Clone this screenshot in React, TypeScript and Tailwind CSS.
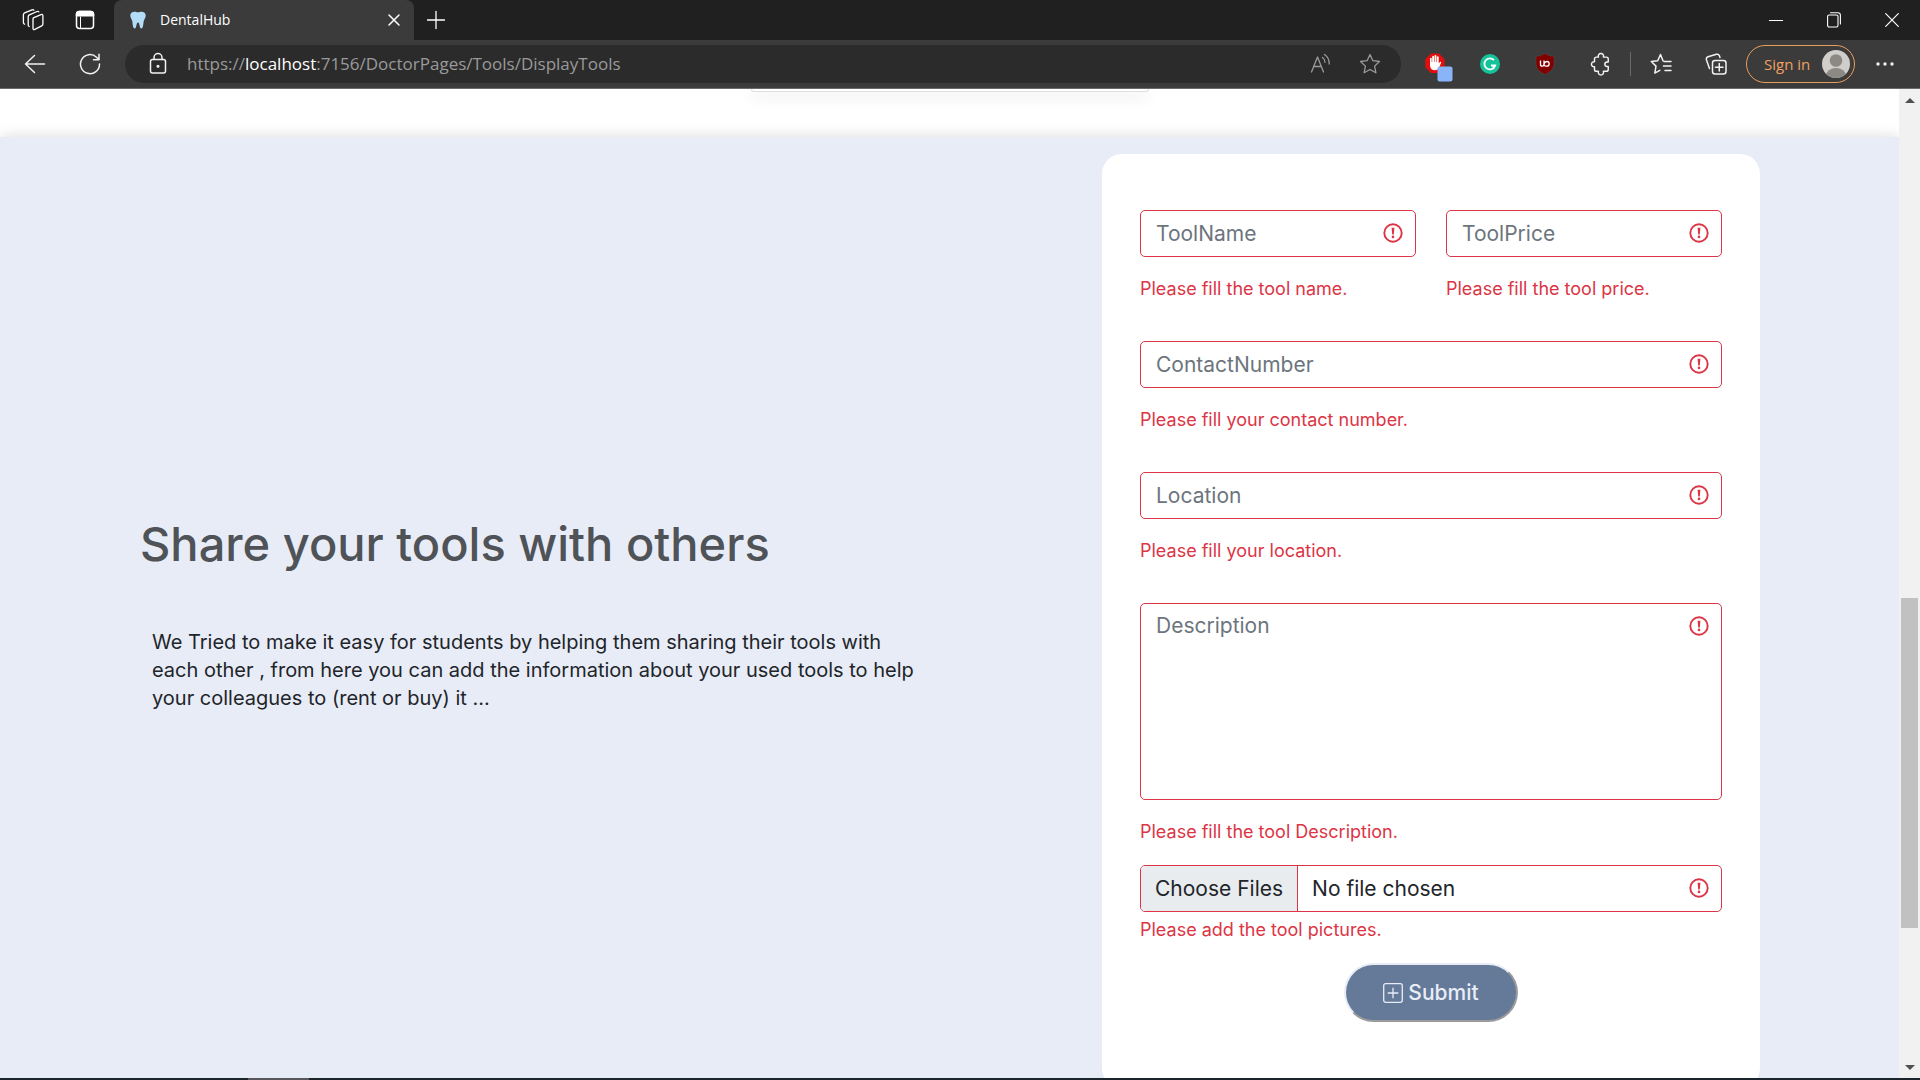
import React from "react";

const line = { fill: "none", stroke: "currentColor", strokeLinecap: "round" as const, strokeLinejoin: "round" as const };

function Alert() {
  return (
    <svg viewBox="0 0 20 20" className="pointer-events-none absolute top-[13px] right-[13px] size-5 text-[#dc3545]" aria-hidden="true">
      <circle cx="10" cy="10" r="8.7" {...line} strokeWidth="1.900" />
      <path d="M8.600 4.800h2.800l-.6 6.600H9.200z" fill="currentColor" />
      <circle cx="10" cy="13.900" r="1.300" fill="currentColor" />
    </svg>
  );
}

const control = "block w-full rounded-[5px] border border-[#dc3545] bg-white text-[21px] leading-[30px] text-[#212529] placeholder:text-[#6c757d] placeholder:opacity-100 outline-none";

function Field({ id, label, error }: { id: string; label: string; error: string }) {
  return (
    <div className="pb-[38px]">
      <div className="relative">
        <input id={id} aria-label={label} placeholder={label} aria-invalid="true" aria-describedby={id + "-error"} className={control + " h-[47px] px-[15px] pr-12"} />
        <Alert />
      </div>
      <p id={id + "-error"} className="mt-[18px] text-[18px] leading-7 text-[#dc3545]">{error}</p>
    </div>
  );
}

function TabStrip() {
  return (
    <div className="flex h-10 shrink-0 items-stretch bg-[#202020] text-white">
      <div className="flex w-[114px] items-center gap-[31px] pl-[22px]">
        <button aria-label="Workspaces">
          <svg viewBox="0 0 22 22" className="size-[22px]" {...line} strokeWidth="1.300">
            <path d="M11.300 8.800 19 5.600q1.900-.7 1.900 1.100v8.400q0 1.200-1.200 1.700l-6.900 3.500q-1.800.8-1.800-1.100v-9z" />
            <path d="M7.200 17.500q-1-.4-1-1.600V7.800q0-1.400 1.200-2l7.600-3.300q1.400-.5 1.800.4" />
            <path d="M2.600 15.200q-1.200-.4-1.200-1.700V5.800q0-1.300 1.200-1.900l7.400-3q1.200-.5 1.800.3" />
          </svg>
        </button>
        <button aria-label="Tab actions">
          <svg viewBox="0 0 20 20" className="size-5" {...line} strokeWidth="1.500">
            <rect x="1.500" y="1.500" width="17" height="17" rx="3" />
            <path d="M1.500 5.800V4.500q0-3 3-3h11q3 0 3 3v1.300z" fill="currentColor" />
            <path d="M5.500 7v11" strokeWidth="1" />
          </svg>
        </button>
      </div>
      <div className="flex w-[300px] items-center rounded-t-lg bg-[#3b3b3b] pr-3 pl-4">
        <svg viewBox="0 0 16 18" className="h-[18px] w-4" aria-hidden="true">
          <path d="M4 .8C1.500 1 .1 2.800.3 5c.2 1.800 1.200 2.900 1.800 4.600.7 2.500.5 8 2.600 8s1.300-6 3.300-6 1.200 6 3.300 6 1.900-5.500 2.600-8c.6-1.700 1.600-2.800 1.800-4.600.2-2.200-1.200-4-3.700-4.200-1.500-.2-2.500.5-4 .5S5.500.6 4 .8z" fill="#b3dcf7" />
        </svg>
        <span className="ml-3.5 grow pb-0.5 text-[14px]">DentalHub</span>
        <button aria-label="Close tab">
          <svg viewBox="0 0 16 16" className="size-4" {...line} strokeWidth="1.500"><path d="m3 3 10 10M13 3 3 13" /></svg>
        </button>
      </div>
      <button aria-label="New tab" className="ml-3">
        <svg viewBox="0 0 20 20" className="size-5" {...line} strokeWidth="1.300"><path d="M10 1.500v17M1.500 10h17" /></svg>
      </button>
      <div className="ml-auto flex items-center gap-11 pr-[21px]">
        <button aria-label="Minimize"><svg viewBox="0 0 14 14" className="size-3.5" stroke="currentColor"><path d="M0 7.500h14" /></svg></button>
        <button aria-label="Restore">
          <svg viewBox="0 0 14 16" className="h-4 w-3.5" {...line} strokeWidth="1.100"><rect x=".6" y="3" width="10.400" height="12" rx="1.500" /><path d="M3.500.7h7.300q2.600 0 2.600 2.600v8.700" /></svg>
        </button>
        <button aria-label="Close window"><svg viewBox="0 0 14 14" className="size-3.5" {...line} strokeWidth="1.200"><path d="m.7.7 12.600 12.600M13.300.7.700 13.300" /></svg></button>
      </div>
    </div>
  );
}

function Toolbar() {
  return (
    <div className="flex h-[49px] shrink-0 items-center border-b border-[#6a6a6a] bg-[#3b3b3b] text-[#f2f2f2]">
      <button aria-label="Back" className="ml-6">
        <svg viewBox="0 0 22 22" className="size-[22px]" {...line} strokeWidth="1.500"><path d="M20.500 11H1.500M10.500 2.500 1.500 11l9 8.500" /></svg>
      </button>
      <button aria-label="Refresh" className="ml-[33px]">
        <svg viewBox="0 0 22 22" className="size-[22px]" {...line} strokeWidth="1.500"><path d="M20.500 11A9.500 9.500 0 1 1 17.500 4.200l2 2M20 1.200v5.500h-5.500" /></svg>
      </button>
      <div className="mr-6 ml-6 flex h-[38px] min-w-0 grow items-center rounded-full bg-[#2b2b2b] pr-5 pl-6">
        <svg viewBox="0 0 18 24" className="h-6 w-[18px] shrink-0" {...line} strokeWidth="1.500" aria-hidden="true">
          <rect x="1.500" y="7.500" width="15" height="13.500" rx="2" /><path d="M5 7.500V5.500a4 4 0 0 1 8 0v2" /><circle cx="9" cy="14.300" r=".8" fill="currentColor" />
        </svg>
        <span className="ml-5 grow truncate text-[17px] text-[#9a9a9a]">https://<span className="text-white">localhost</span>:7156/DoctorPages/Tools/DisplayTools</span>
        <button aria-label="Read aloud" className="text-[#9a9a9a]">
          <svg viewBox="0 0 22 22" className="size-[22px]" {...line} strokeWidth="1.300"><path d="M1.500 19 7.500 4l6 15M4 13.500h7.300M12.500 4.500q2.500 1.800 2.500 4.800M14.500 1.500Q19.500 5 19.200 11" /></svg>
        </button>
        <button aria-label="Add to favorites" className="ml-[27px] text-[#9a9a9a]">
          <svg viewBox="0 0 22 22" className="size-[22px]" {...line} strokeWidth="1.300"><path d="m11 1.500 2.900 6.200 6.600.8-4.900 4.600 1.300 6.700-5.900-3.300-5.900 3.300 1.300-6.700L1.500 8.500l6.600-.8z" /></svg>
        </button>
      </div>
      <div className="flex shrink-0 items-center">
        <button aria-label="AdBlock">
          <svg viewBox="0 -6 28 36" className="h-9 w-7">
            <path d="M6 1.500h8l5.700 5.700v8L14 21H6L.300 15.200v-8z" fill="#e40d0d" />
            <path d="M5 11.500V6.300q.9-1.300 1.700 0V10h.5V4.500q.9-1.300 1.800 0V10h.5V3.600q1-1.300 1.900 0V10h.5V4.800q.9-1.300 1.800 0v6.700l1.400-1.700q1.500-.4 1 .9l-2.300 5.500q-1.200 2-3.800 2-5 0-5-5z" fill="#fff" />
            <rect x="12.500" y="14.500" width="15" height="15" rx="2" fill="#8ab4f8" />
          </svg>
        </button>
        <button aria-label="Grammarly" className="ml-[27px]">
          <svg viewBox="0 0 20 20" className="size-5"><circle cx="10" cy="10" r="10" fill="#15c39a" /><path d="M14 6.200A5.500 5.500 0 1 0 15.200 11.500H11M13.500 11.500v3.800" fill="none" stroke="#fff" strokeWidth="1.800" /></svg>
        </button>
        <button aria-label="uBlock Origin" className="ml-[35px]">
          <svg viewBox="0 0 20 22" className="h-[22px] w-5">
            <path d="M10 .5Q14 3.300 19 3.200V11q0 6.500-9 10.500Q1 17.500 1 11V3.200Q6 3.300 10 .5z" fill="#800000" stroke="#5c4a4a" strokeWidth=".5" />
            <path d="M5.500 7.500v3.700q0 2 1.700 2t1.800-2V7.500m0 3.700q.2 2 2 2h1q2 0 2.200-2.300-.1-2.400-2.200-2.400T9 10.900" fill="none" stroke="#fff" strokeWidth="1.300" />
          </svg>
        </button>
        <button aria-label="Extensions" className="ml-[34px]">
          <svg viewBox="-1 -1 24 26" className="h-6 w-[22px]" {...line} strokeWidth="1.600"><path d="M7 4.500h2.300a2.900 2.900 0 1 1 5.400 0H18q2 0 2 2v3.300h-1.200a2.500 2.500 0 1 0 0 5H20V18q0 2-2 2h-3.300a2.900 2.900 0 1 1-5.400 0H7q-2 0-2-2v-3a2.800 2.800 0 1 1 0-5.500v-3q0-2 2-2z" /></svg>
        </button>
        <span className="ml-[19px] h-6 w-px bg-[#6a6a6a]" />
        <button aria-label="Favorites" className="ml-[19px]">
          <svg viewBox="0 0 22 22" className="size-[22px]" {...line} strokeWidth="1.500"><path d="M13 7.800 10.500 1.500 7.700 7.700l-6.400.8 4.700 4.600-1.200 7 5-2.800M14 8.500h7M13.500 13H21M15 17.500h6" /></svg>
        </button>
        <button aria-label="Collections" className="ml-[33px]">
          <svg viewBox="0 0 22 22" className="size-[22px]" {...line} strokeWidth="1.500"><rect x="7.500" y="7.500" width="13.500" height="13.500" rx="2.500" /><path d="M14.250 10.500v7.500M10.500 14.250H18M4.500 15.500 1.500 7q-.7-2.400 1.500-3.200l8.500-2.500q2-.5 2.800 1.200l.7 2" /></svg>
        </button>
        <button className="ml-[19px] flex h-[38px] w-[109px] items-center justify-between rounded-full border border-[#eb9d5c] pr-1 pl-[17px] text-[15px] text-[#f0a060]">
          Sign in
          <svg viewBox="0 0 28 28" className="size-7" aria-hidden="true">
            <clipPath id="avatar"><circle cx="14" cy="14" r="14" /></clipPath>
            <g clipPath="url(#avatar)"><path d="M0 0h28v28H0z" fill="#d0ceca" /><circle cx="14" cy="10.500" r="6.300" fill="#8c8884" /><ellipse cx="14" cy="26" rx="10" ry="8" fill="#8c8884" /></g>
          </svg>
        </button>
        <button aria-label="Settings and more" className="mr-[26px] ml-[21px]">
          <svg viewBox="0 0 18 4" className="h-1 w-[18px]" fill="currentColor"><circle cx="2" cy="2" r="1.700" /><circle cx="9" cy="2" r="1.700" /><circle cx="16" cy="2" r="1.700" /></svg>
        </button>
      </div>
    </div>
  );
}

function ShareForm() {
  return (
    <form className="w-[658px] shrink-0 rounded-[20px] bg-white px-[38px] pt-14 pb-[66px]" noValidate onSubmit={(e) => e.preventDefault()}>
      <div className="grid grid-cols-2 gap-[30px]">
        <Field id="tool-name" label="ToolName" error="Please fill the tool name." />
        <Field id="tool-price" label="ToolPrice" error="Please fill the tool price." />
      </div>
      <Field id="contact" label="ContactNumber" error="Please fill your contact number." />
      <Field id="location" label="Location" error="Please fill your location." />
      <div className="relative">
        <textarea aria-label="Description" placeholder="Description" aria-invalid="true" className={control + " h-[197px] resize-none px-[15px] py-[7px]"} />
        <Alert />
      </div>
      <p className="mt-[18px] text-[18px] leading-7 text-[#dc3545]">Please fill the tool Description.</p>
      <div className="relative mt-[19px]">
        <input type="file" multiple aria-label="Tool pictures" aria-invalid="true" className={control + " h-[47px] overflow-hidden file:mr-[14px] file:h-[45px] file:border-r file:border-[#dc3545] file:bg-[#e9ecef] file:px-[14px] file:text-[#212529]"} />
        <Alert />
      </div>
      <p className="mt-1 text-[18px] leading-7 text-[#dc3545]">Please add the tool pictures.</p>
      <button type="submit" className="mx-auto mt-[19px] flex h-[59px] w-[174px] items-center justify-center gap-[5px] rounded-full border-2 border-t-[#e7ecf7] border-r-[#9b9b9b] border-b-[#9b9b9b] border-l-[#e7ecf7] bg-[#657a98] text-[21px] font-medium text-[#e8edf8]">
        <svg viewBox="0 0 20 20" className="size-5" {...line} strokeWidth="1.300" aria-hidden="true"><rect x=".7" y=".7" width="18.600" height="18.600" rx="2" /><path d="M10 5.200v9.600M5.200 10h9.600" /></svg>
        Submit
      </button>
    </form>
  );
}

function Scrollbar() {
  return (
    <div className="flex w-[21px] shrink-0 flex-col items-center bg-[#f1f1f1] pt-[9px] pb-2" aria-hidden="true">
      <svg viewBox="0 0 10 5" className="h-[5px] w-2.5" fill="#505050"><path d="M0 5 5 0l5 5z" /></svg>
      <div className="grow-[495]" />
      <div className="w-[17px] grow-[330] bg-[#c1c1c1]" />
      <div className="grow-[137]" />
      <svg viewBox="0 0 10 5" className="h-[5px] w-2.5" fill="#505050"><path d="m0 0 5 5 5-5z" /></svg>
    </div>
  );
}

export default function App() {
  return (
    <div className="flex h-screen flex-col overflow-hidden bg-white font-['Open_Sans',sans-serif]">
      <TabStrip />
      <Toolbar />
      <div className="flex min-h-0 grow">
        <main className="min-w-0 grow overflow-hidden font-['Inter',sans-serif]">
          <div className="flex h-12 items-start justify-center">
            <div className="h-[3px] w-[398px] rounded-b-[5px] border border-t-0 border-[#dfdfdf] shadow-[0_4px_16px_rgba(0,0,0,0.18)]" />
          </div>
          <section className="flex items-center justify-between gap-8 bg-[#e8ecf7] py-[17px] pr-[139px] pl-[140px] shadow-[0_0_14px_rgba(0,0,0,0.15)]">
            <div className="pb-3.5">
              <h1 className="text-[47px] leading-[56px] font-medium text-[#4f5357]">Share your tools with others</h1>
              <p className="mt-14 ml-3 max-w-[780px] text-[20px] leading-7 text-[#212529]">
                We Tried to make it easy for students by helping them sharing their tools with each other , from here you can add the information about your used tools to help your colleagues to (rent or buy) it ...
              </p>
            </div>
            <ShareForm />
          </section>
        </main>
        <Scrollbar />
      </div>
      <div className="flex h-0.5 shrink-0 bg-[#1d252c]"><div className="ml-[248px] w-[61px] bg-[#57575c]" /></div>
    </div>
  );
}
